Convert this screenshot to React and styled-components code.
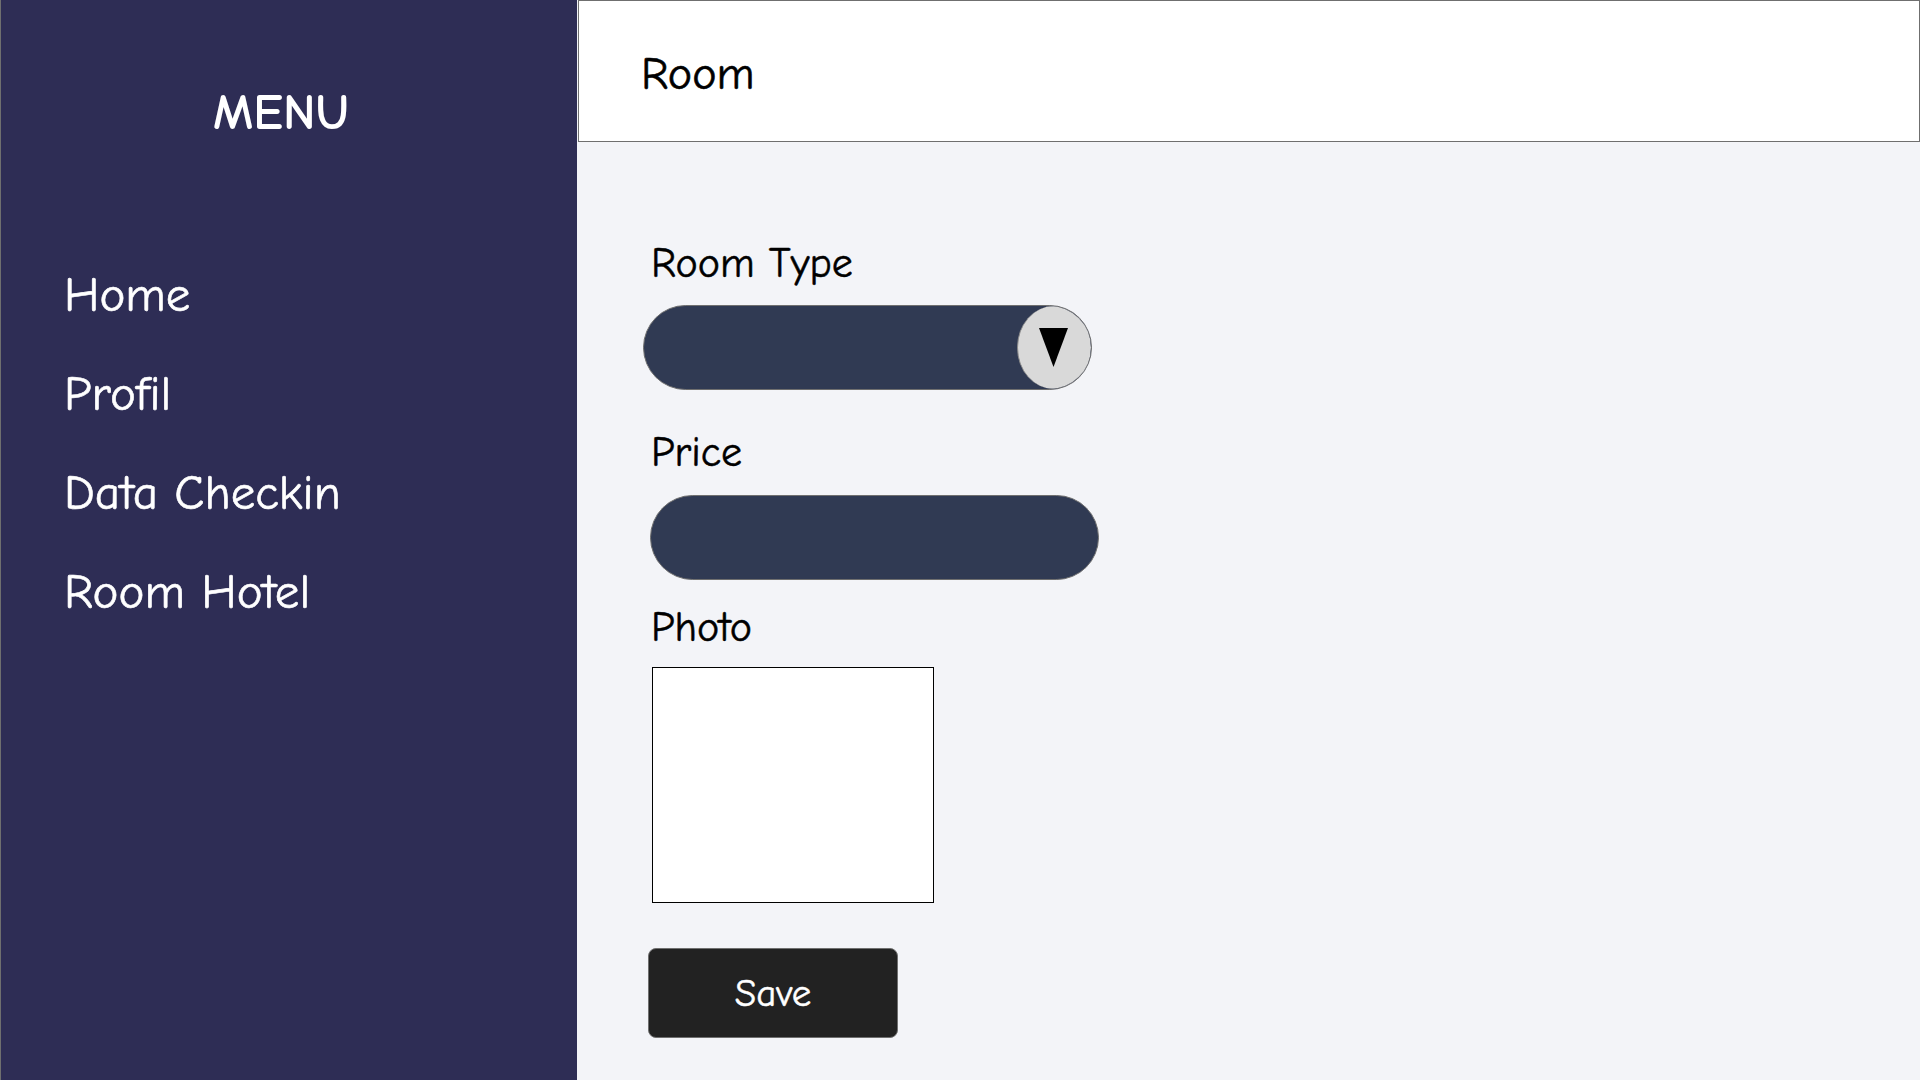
import React from 'react';
import styled, { createGlobalStyle } from 'styled-components';

const GlobalStyle = createGlobalStyle`
  * {
    box-sizing: border-box;
    margin: 0;
    padding: 0;
  }
  body {
    font-family: "Comic Sans MS", "Comic Neue", "Open Sans", sans-serif;
    background: #f3f4f8;
  }
`;

const Page = styled.div`
  display: flex;
  width: 1920px;
  height: 1080px;
  overflow: hidden;
`;

const Sidebar = styled.nav`
  width: 577px;
  flex-shrink: 0;
  background: #2e2d55;
  border-left: 1px solid #6f6f6f;
  display: flex;
  flex-direction: column;
  padding-top: 84px;
`;

const MenuTitle = styled.h1`
  color: #fff;
  font-size: 50px;
  font-weight: 700;
  line-height: 58px;
  text-align: center;
  margin-right: 16px;
`;

const NavList = styled.ul`
  list-style: none;
  display: flex;
  flex-direction: column;
  gap: 41px;
  margin-top: 124px;
  padding-left: 63px;
`;

const NavItem = styled.li`
  color: #fff;
  font-size: 49px;
  line-height: 58px;
  -webkit-text-stroke: 0.6px #fff;
`;

const Main = styled.main`
  flex: 1;
  display: flex;
  flex-direction: column;
  padding-left: 1px;
`;

const Header = styled.header`
  height: 142px;
  background: #fff;
  border: 1px solid #6f6f6f;
  display: flex;
  align-items: center;
  padding-left: 62px;
  padding-top: 6px;
`;

const Title = styled.h2`
  font-size: 46px;
  font-weight: 400;
  color: #000;
  -webkit-text-stroke: 0.6px #000;
`;

const Form = styled.form`
  display: flex;
  flex-direction: column;
  align-items: flex-start;
  padding-top: 102px;
  padding-left: 72px;
`;

const Label = styled.label`
  font-size: 42px;
  line-height: 40px;
  color: #000;
  margin-left: 1px;
  margin-top: ${p => p.$gap || 0}px;
  -webkit-text-stroke: 0.5px #000;
`;

const Select = styled.div`
  width: 449px;
  height: 85px;
  margin-top: 21px;
  margin-left: -7px;
  background: #303a53;
  border: 1px solid #6f6f6f;
  border-radius: 43px;
  display: flex;
  justify-content: flex-end;
  overflow: hidden;
`;

const DropButton = styled.div`
  width: 74px;
  height: 100%;
  background: #d9d9d9;
  border-left: 1px solid #8a8a8a;
  border-radius: 37px / 42px;
  display: flex;
  align-items: center;
  justify-content: center;
  padding-right: 2px;
`;

const Input = styled.div`
  width: 449px;
  height: 85px;
  margin-top: 22px;
  background: #303a53;
  border: 1px solid #6f6f6f;
  border-radius: 43px;
`;

const PhotoBox = styled.div`
  width: 282px;
  height: 236px;
  margin-top: 19px;
  margin-left: 2px;
  background: #fff;
  border: 1px solid #000;
`;

const SaveButton = styled.button`
  width: 250px;
  height: 90px;
  margin-top: 45px;
  margin-left: -2px;
  background: #222222;
  border: 1px solid #6f6f6f;
  border-radius: 8px;
  color: #fff;
  font-family: inherit;
  font-size: 39px;
  -webkit-text-stroke: 0.5px #fff;
`;

export default function App() {
  return (
    <>
      <GlobalStyle />
      <Page>
        <Sidebar>
          <MenuTitle>MENU</MenuTitle>
          <NavList>
            <NavItem>Home</NavItem>
            <NavItem>Profil</NavItem>
            <NavItem>Data Checkin</NavItem>
            <NavItem>Room Hotel</NavItem>
          </NavList>
        </Sidebar>
        <Main>
          <Header>
            <Title>Room</Title>
          </Header>
          <Form>
            <Label>Room Type</Label>
            <Select>
              <DropButton>
                <svg width="29" height="39" viewBox="0 0 29 39">
                  <polygon points="0,0 29,0 14.5,39" fill="#000" />
                </svg>
              </DropButton>
            </Select>
            <Label $gap={43}>Price</Label>
            <Input />
            <Label $gap={28}>Photo</Label>
            <PhotoBox />
            <SaveButton type="button">Save</SaveButton>
          </Form>
        </Main>
      </Page>
    </>
  );
}
